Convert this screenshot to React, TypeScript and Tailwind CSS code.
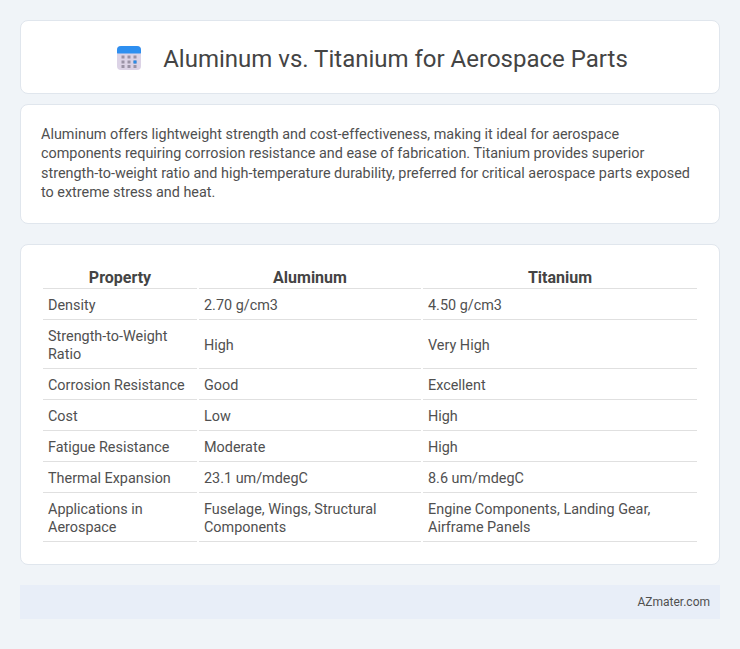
function CalendarIcon() {
  return (
    <svg width="26" height="26" viewBox="0 0 26 26" className="block">
      <rect x="1" y="1" width="24" height="24" rx="4" fill="#dcd3e6" />
      <path d="M1 8V5a4 4 0 0 1 4-4h16a4 4 0 0 1 4 4v3a1 1 0 0 1-.5.5h-23A1 1 0 0 1 1 8Z" fill="#2e8ff0" />
      {[5, 11, 17].flatMap((x) =>
        [10.5, 15.5, 20].map((y) => (
          <rect key={`${x}-${y}`} x={x + 0.5} y={y} width="3" height="3" fill="#9b93a6" />
        )),
      )}
      <rect x="17.5" y="15.5" width="3" height="3" fill="#2a8ce8" />
    </svg>
  );
}

const rows = [
  ["Density", "2.70 g/cm3", "4.50 g/cm3"],
  ["Strength-to-Weight Ratio", "High", "Very High"],
  ["Corrosion Resistance", "Good", "Excellent"],
  ["Cost", "Low", "High"],
  ["Fatigue Resistance", "Moderate", "High"],
  ["Thermal Expansion", "23.1 um/mdegC", "8.6 um/mdegC"],
  ["Applications in Aerospace", "Fuselage, Wings, Structural Components", "Engine Components, Landing Gear, Airframe Panels"],
];

export default function App() {
  return (
    <div className="min-h-[649px] bg-[#f0f4f8] px-5 pt-5 font-['Roboto',sans-serif] text-[#505050]">
      <header className="flex h-[74px] items-center justify-center rounded-lg border border-[#e0e6ed] bg-white pl-1 pt-[2px]">
        <CalendarIcon />
        <h1 className="ml-[21px] mt-[2px] text-2xl leading-none text-[#444]">Aluminum vs. Titanium for Aerospace Parts</h1>
      </header>

      <section className="mt-[10px] rounded-lg border border-[#e0e6ed] bg-white px-5 pb-5 pt-[20px] text-[14.4px] leading-[19.44px]">
        <p>
          Aluminum offers lightweight strength and cost-effectiveness, making it ideal for aerospace components
          requiring corrosion resistance and ease of fabrication. Titanium provides superior strength-to-weight ratio
          and high-temperature durability, preferred for critical aerospace parts exposed to extreme stress and heat.
        </p>
      </section>

      <section className="mt-5 rounded-lg border border-[#e0e6ed] bg-white px-5 pb-5 pt-[21px]">
        <table className="w-full border-separate border-spacing-[2px] text-[14.4px] leading-[18px]">
          <thead>
            <tr className="text-[#444]">
              <th className="w-[154px] border-b border-[#e0e0e0] px-[5px] py-[1px] text-center text-base font-bold leading-[18px]">Property</th>
              <th className="w-[222px] border-b border-[#e0e0e0] px-[5px] py-[1px] text-center text-base font-bold leading-[18px]">Aluminum</th>
              <th className="border-b border-[#e0e0e0] px-[5px] py-[1px] text-center text-base font-bold leading-[18px]">Titanium</th>
            </tr>
          </thead>
          <tbody>
            {rows.map((r) => (
              <tr key={r[0]}>
                {r.map((c) => (
                  <td key={c} className="border-b border-[#e0e0e0] px-[5px] pb-[4px] pt-[6px]">{c}</td>
                ))}
              </tr>
            ))}
          </tbody>
        </table>
      </section>

      <footer className="mt-[20px] flex h-[34px] items-center justify-end bg-[#e8eef8] px-[10px] text-xs">AZmater.com</footer>
    </div>
  );
}
